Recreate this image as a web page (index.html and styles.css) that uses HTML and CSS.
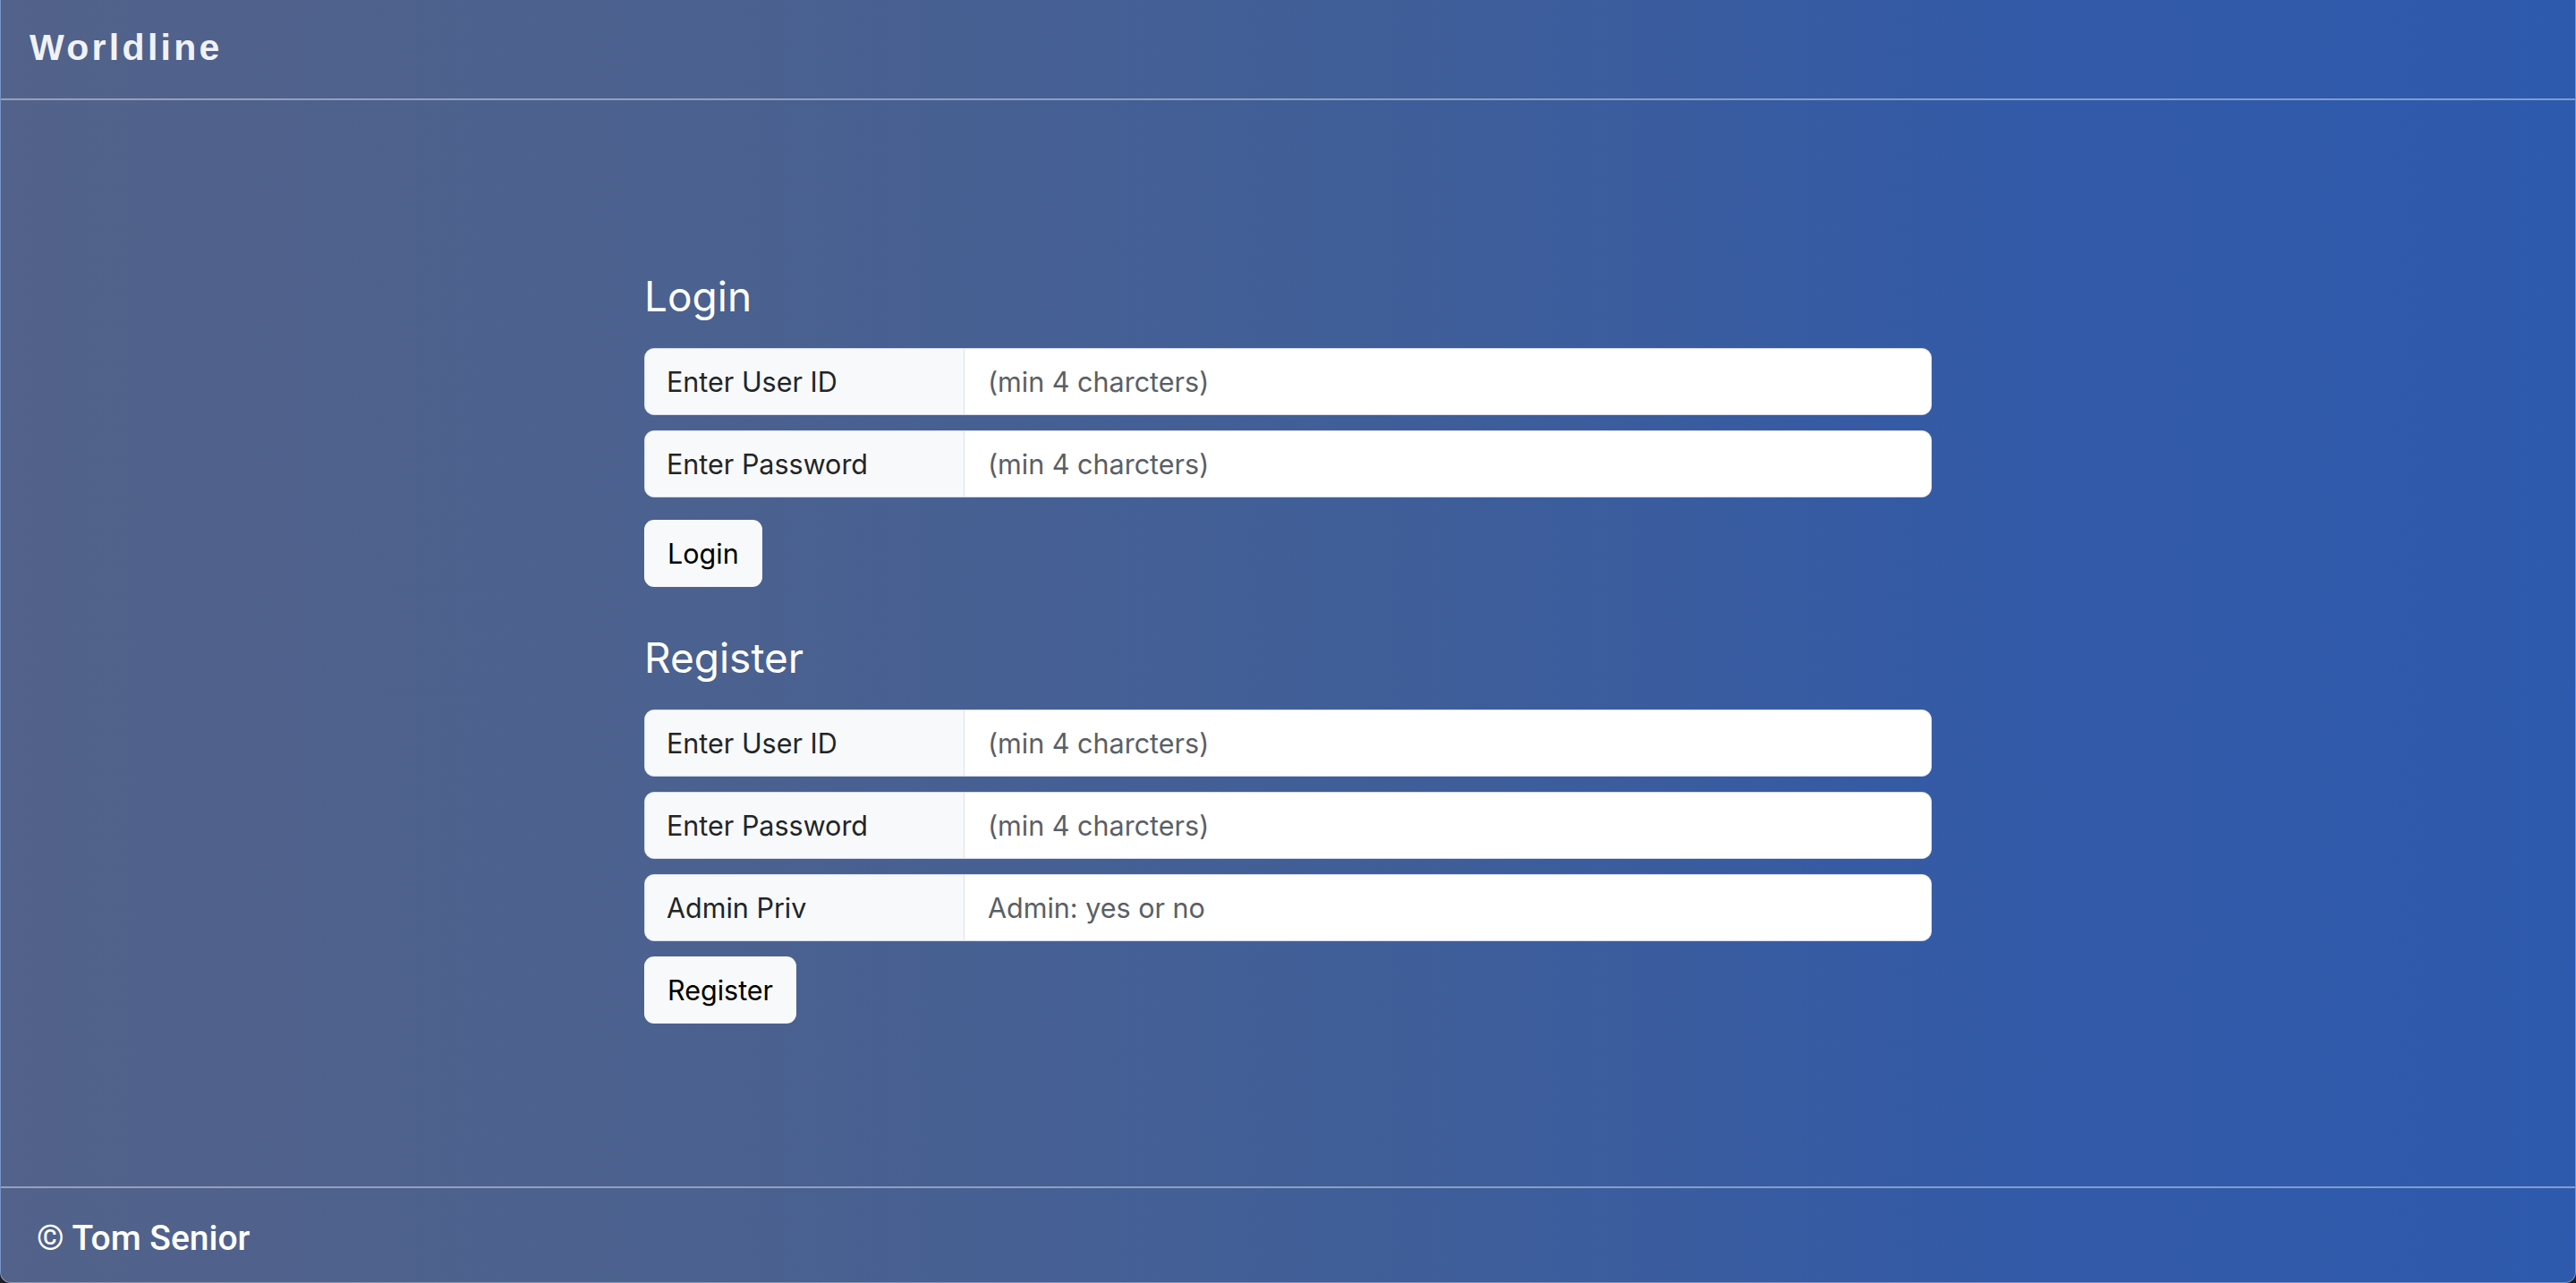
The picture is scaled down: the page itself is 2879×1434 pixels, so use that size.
FILE: index.html
```html
<!DOCTYPE html>
<html lang="en">
<head>
<meta charset="utf-8">
<title>Worldline</title>
<link rel="stylesheet" href="styles.css">
</head>
<body>
<div class="app">
  <header class="topbar"><span class="brand">Worldline</span></header>
  <main class="content">
    <section class="panel">
      <h3 class="title">Login</h3>
      <div class="field"><span class="field-label">Enter User ID</span><input class="field-input" type="text" placeholder="(min 4 charcters)"></div>
      <div class="field"><span class="field-label">Enter Password</span><input class="field-input" type="password" placeholder="(min 4 charcters)"></div>
      <button class="btn btn-login" type="button">Login</button>
    </section>
    <section class="panel panel-register">
      <h3 class="title">Register</h3>
      <div class="field"><span class="field-label">Enter User ID</span><input class="field-input" type="text" placeholder="(min 4 charcters)"></div>
      <div class="field"><span class="field-label">Enter Password</span><input class="field-input" type="password" placeholder="(min 4 charcters)"></div>
      <div class="field"><span class="field-label">Admin Priv</span><input class="field-input" type="text" placeholder="Admin: yes or no"></div>
      <button class="btn" type="button">Register</button>
    </section>
  </main>
  <footer class="bottombar"><span>© Tom Senior</span></footer>
</div>
</body>
</html>
```
FILE: styles.css
```css
html, body {
  margin: 0;
  height: 100%;
  background: #1b1e25;
}

.app {
  box-sizing: border-box;
  height: 1434px;
  display: flex;
  flex-direction: column;
  background: linear-gradient(90deg, #52628a 0%, #4a6190 30%, #3f5e99 55%, #335aa7 78%, #2e5aad 100%);
  border: 1px solid rgba(255, 255, 255, 0.35);
  border-top: none;
  border-radius: 0 0 12px 12px;
  overflow: hidden;
  font-family: Inter, "Noto Sans", sans-serif;
}

.topbar {
  box-sizing: border-box;
  height: 112px;
  flex: none;
  border-bottom: 2px solid rgba(255, 255, 255, 0.4);
  display: flex;
  align-items: center;
  padding-left: 32px;
  padding-bottom: 3px;
}

.brand {
  font-family: "Liberation Sans", Arial, sans-serif;
  font-weight: 700;
  font-size: 41px;
  letter-spacing: 3.3px;
  color: #f0f2f6;
}

.content {
  flex: 1;
  padding-top: 192px;
}

.panel {
  width: 1439px;
  margin: 0 auto;
}

.panel-register {
  margin-top: 52px;
}

.title {
  margin: 0 0 30px;
  font-size: 46px;
  font-weight: 400;
  line-height: 55px;
  color: #ffffff;
}

.field {
  box-sizing: border-box;
  display: flex;
  height: 75px;
  margin-bottom: 17px;
  border: 1px solid #d5dbee;
  border-radius: 11px;
  overflow: hidden;
  background: #ffffff;
}

.field-label {
  box-sizing: border-box;
  flex: none;
  width: 357px;
  display: flex;
  align-items: center;
  padding-left: 24px;
  background: #f8f9fa;
  border-right: 1px solid #dee2e6;
  font-size: 30.5px;
  color: #212529;
}

.field-input {
  flex: 1;
  min-width: 0;
  border: 0;
  margin: 0;
  padding: 0 0 0 26px;
  font-family: inherit;
  font-size: 30.5px;
  color: #212529;
  background: #ffffff;
  outline: none;
}

.field-input::placeholder {
  color: #5a5f66;
  opacity: 1;
}

.btn {
  height: 75px;
  padding: 0 26px;
  border: 0;
  border-radius: 11px;
  background: #f8f9fa;
  color: #000000;
  font-family: inherit;
  font-size: 30.5px;
  cursor: pointer;
}

.btn-login {
  margin-top: 8px;
}

.bottombar {
  box-sizing: border-box;
  height: 107px;
  flex: none;
  border-top: 2px solid rgba(255, 255, 255, 0.4);
  display: flex;
  align-items: center;
  padding-left: 40px;
  padding-top: 6px;
  font-family: Roboto, "Liberation Sans", sans-serif;
  font-size: 39px;
  font-weight: 500;
  color: #ffffff;
}
```
